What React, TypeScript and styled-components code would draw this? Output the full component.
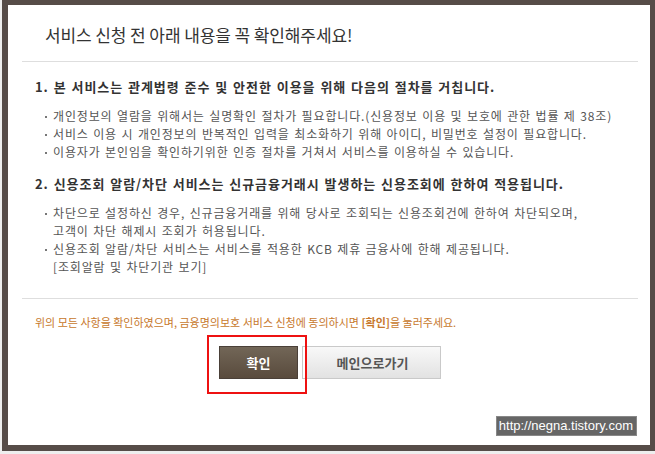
import styled, { createGlobalStyle } from "styled-components";

const GlobalStyle = createGlobalStyle`
    html, body {
        margin: 0;
        padding: 0;
        background: #eeeeee;
    }
    body {
        font-family: "Noto Sans CJK KR", "Noto Sans", sans-serif;
    }
`;

const Frame = styled.div`
    margin-left: 2px;
    width: 653px;
    box-sizing: border-box;
    border-style: solid;
    border-color: #564c48;
    border-width: 5px 5px 6px 6px;
    background: #ffffff;
`;

const Panel = styled.div`
    position: relative;
    height: 440px;
    padding: 0 12px 0 14px;
    box-sizing: border-box;
`;

const Title = styled.h1`
    margin: 0;
    padding: 17px 0 0 23px;
    font-size: 17px;
    line-height: 26px;
    font-weight: normal;
    letter-spacing: -0.1px;
    color: #333333;
`;

const Divider = styled.hr<{ $top: number }>`
    margin: ${(p) => p.$top}px 0 0;
    border: none;
    border-top: 1px solid #dedede;
    height: 0;
`;

const Body = styled.div`
    padding-left: 13px;
`;

const Heading = styled.h2<{ $top: number }>`
    margin: ${(p) => p.$top}px 0 0;
    font-size: 13px;
    line-height: 18px;
    font-weight: bold;
    letter-spacing: 0.95px;
    word-spacing: 1px;
    color: #333333;
`;

const List = styled.ul`
    list-style: none;
    margin: 11px 0 0;
    padding: 0 0 0 10px;
`;

const Item = styled.li`
    position: relative;
    padding-left: 8px;
    font-size: 12px;
    line-height: 18px;
    letter-spacing: 0.85px;
    word-spacing: 1px;
    color: #555555;

    &::before {
        content: "";
        position: absolute;
        left: 0;
        top: 9px;
        width: 2px;
        height: 2px;
        background: #777777;
    }
`;

const Notice = styled.p`
    margin: 14px 0 0;
    font-size: 11px;
    line-height: 18px;
    letter-spacing: 0px;
    color: #c7782c;

    b {
        font-weight: bold;
    }
`;

const Buttons = styled.div`
    display: flex;
    justify-content: center;
    gap: 4px;
    margin-top: 15px;
`;

const ConfirmWrap = styled.div`
    position: relative;
`;

const Highlight = styled.div`
    position: absolute;
    left: -12px;
    top: -11px;
    right: -9px;
    bottom: -15px;
    border: 2px solid #ee1111;
    pointer-events: none;
`;

const ConfirmButton = styled.button`
    width: 79px;
    height: 33px;
    border: 1px solid #4a4038;
    background: linear-gradient(#726657, #594b3d);
    color: #ffffff;
    font-family: inherit;
    font-size: 13px;
    font-weight: bold;
    cursor: pointer;
`;

const MainButton = styled.button`
    width: 139px;
    height: 33px;
    border: 1px solid #c9c9c9;
    padding: 0;
    background: #ffffff;
    cursor: pointer;

    span {
        display: flex;
        align-items: center;
        justify-content: center;
        margin: 0 0 0 2px;
        height: 100%;
        background: linear-gradient(#f8f8f8, #e2e2e2);
        color: #555555;
        font-family: "Noto Sans CJK KR", sans-serif;
        font-size: 13px;
        font-weight: bold;
    }
`;

const Watermark = styled.div`
    position: absolute;
    right: 13px;
    top: 411px;
    height: 20px;
    padding: 0 3px 0 2px;
    background: #666666;
    border: 1px solid #888888;
    box-sizing: border-box;
    color: #ffffff;
    font-family: "Liberation Sans", Arial, sans-serif;
    font-size: 13px;
    line-height: 18px;
`;

export default function App() {
    return (
        <>
            <GlobalStyle />
            <Frame>
                <Panel>
                    <Title>서비스 신청 전 아래 내용을 꼭 확인해주세요!</Title>
                    <Divider $top={13} />
                    <Body>
                        <Heading $top={16}>
                            1. 본 서비스는 관계법령 준수 및 안전한 이용을 위해 다음의 절차를 거칩니다.
                        </Heading>
                        <List>
                            <Item>
                                개인정보의 열람을 위해서는 실명확인 절차가 필요합니다.(신용정보 이용 및 보호에 관한 법률 제 38조)
                            </Item>
                            <Item>
                                서비스 이용 시 개인정보의 반복적인 입력을 최소화하기 위해 아이디, 비밀번호 설정이 필요합니다.
                            </Item>
                            <Item>이용자가 본인임을 확인하기위한 인증 절차를 거쳐서 서비스를 이용하실 수 있습니다.</Item>
                        </List>
                        <Heading $top={14}>
                            2. 신용조회 알람/차단 서비스는 신규금융거래시 발생하는 신용조회에 한하여 적용됩니다.
                        </Heading>
                        <List>
                            <Item>
                                차단으로 설정하신 경우, 신규금융거래를 위해 당사로 조회되는 신용조회건에 한하여 차단되오며,
                                <br />
                                고객이 차단 해제시 조회가 허용됩니다.
                            </Item>
                            <Item>
                                신용조회 알람/차단 서비스는 서비스를 적용한 KCB 제휴 금융사에 한해 제공됩니다.
                                <br />
                                [조회알람 및 차단기관 보기]
                            </Item>
                        </List>
                    </Body>
                    <Divider $top={22} />
                    <Body>
                        <Notice>
                            위의 모든 사항을 확인하였으며, 금융명의보호 서비스 신청에 동의하시면 <b>[확인]</b>을 눌러주세요.
                        </Notice>
                    </Body>
                    <Buttons>
                        <ConfirmWrap>
                            <ConfirmButton>확인</ConfirmButton>
                            <Highlight />
                        </ConfirmWrap>
                        <MainButton>
                            <span>메인으로가기</span>
                        </MainButton>
                    </Buttons>
                    <Watermark>http://negna.tistory.com</Watermark>
                </Panel>
            </Frame>
        </>
    );
}
